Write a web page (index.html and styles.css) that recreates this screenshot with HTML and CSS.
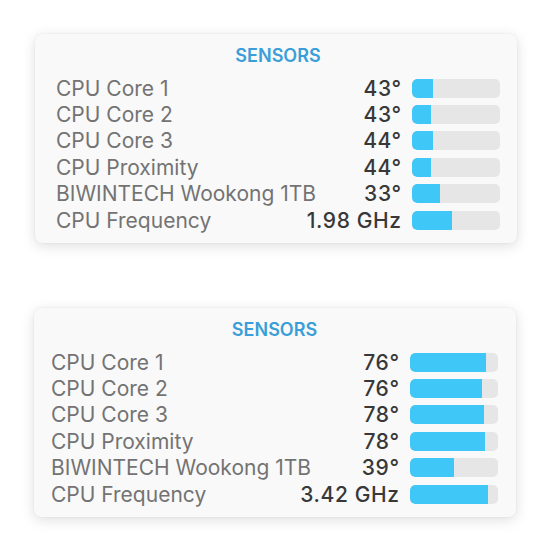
FILE: index.html
```html
<!DOCTYPE html>
<html>
<head>
<meta charset="utf-8">
<link rel="stylesheet" href="styles.css">
</head>
<body>
<div class="page">
  <section class="panel panel-a">
    <h2 class="title">SENSORS</h2>
    <div class="rows">
      <div class="row"><span class="label">CPU Core 1</span><span class="value">43°</span><div class="bar"><div class="fill" style="width:21px"></div></div></div>
      <div class="row"><span class="label">CPU Core 2</span><span class="value">43°</span><div class="bar"><div class="fill" style="width:19px"></div></div></div>
      <div class="row"><span class="label">CPU Core 3</span><span class="value">44°</span><div class="bar"><div class="fill" style="width:21px"></div></div></div>
      <div class="row"><span class="label">CPU Proximity</span><span class="value">44°</span><div class="bar"><div class="fill" style="width:19px"></div></div></div>
      <div class="row"><span class="label">BIWINTECH Wookong 1TB</span><span class="value">33°</span><div class="bar"><div class="fill" style="width:28px"></div></div></div>
      <div class="row"><span class="label">CPU Frequency</span><span class="value">1.98 GHz</span><div class="bar"><div class="fill" style="width:40px"></div></div></div>
    </div>
  </section>
  <section class="panel panel-b">
    <h2 class="title">SENSORS</h2>
    <div class="rows">
      <div class="row"><span class="label">CPU Core 1</span><span class="value">76°</span><div class="bar"><div class="fill" style="width:76px"></div></div></div>
      <div class="row"><span class="label">CPU Core 2</span><span class="value">76°</span><div class="bar"><div class="fill" style="width:72px"></div></div></div>
      <div class="row"><span class="label">CPU Core 3</span><span class="value">78°</span><div class="bar"><div class="fill" style="width:74px"></div></div></div>
      <div class="row"><span class="label">CPU Proximity</span><span class="value">78°</span><div class="bar"><div class="fill" style="width:75px"></div></div></div>
      <div class="row"><span class="label">BIWINTECH Wookong 1TB</span><span class="value">39°</span><div class="bar"><div class="fill" style="width:44px"></div></div></div>
      <div class="row"><span class="label">CPU Frequency</span><span class="value">3.42 GHz</span><div class="bar"><div class="fill" style="width:78px"></div></div></div>
    </div>
  </section>
</div>
</body>
</html>
```
FILE: styles.css
```css
* { box-sizing: border-box; }
html, body { margin: 0; padding: 0; background: #ffffff; }
body {
  font-family: Inter, "Liberation Sans", sans-serif;
  width: 552px;
  height: 552px;
  overflow: hidden;
}
.page {
  display: flex;
  flex-direction: column;
  padding-top: 34px;
  gap: 65px;
}
.panel {
  width: 482px;
  height: 209px;
  background: #f9f9f9;
  border-radius: 7px;
  box-shadow: 0 3px 14px rgba(0,0,0,0.13), 0 0 2px rgba(0,0,0,0.08);
  padding: 11px 17px 10px 21px;
}
.panel-a { margin-left: 35px; }
.panel-b { margin-left: 34px; padding-left: 17px; padding-right: 18px; }
.title {
  margin: 0;
  text-align: center;
  font-size: 18px;
  font-weight: 600;
  line-height: 22px;
  color: #3a9fd8;
}
.rows {
  margin-top: 8px;
  display: flex;
  flex-direction: column;
}
.row {
  height: 26.4px;
  display: flex;
  align-items: center;
  gap: 11px;
}
.label {
  flex: 1 1 0;
  min-width: 0;
  font-size: 21px;
  color: #737373;
  white-space: nowrap;
}
.value {
  flex: none;
  font-size: 21px;
  font-weight: 500;
  color: #383838;
  text-align: right;
  white-space: nowrap;
  letter-spacing: 0.6px;
  margin-right: -0.6px;
}
.bar {
  flex: none;
  width: 88px;
  height: 19px;
  background: #e6e6e6;
  border-radius: 5px;
  overflow: hidden;
}
.fill {
  height: 100%;
  background: #3fc8f7;
  border-radius: 5px 0 0 5px;
}
```
